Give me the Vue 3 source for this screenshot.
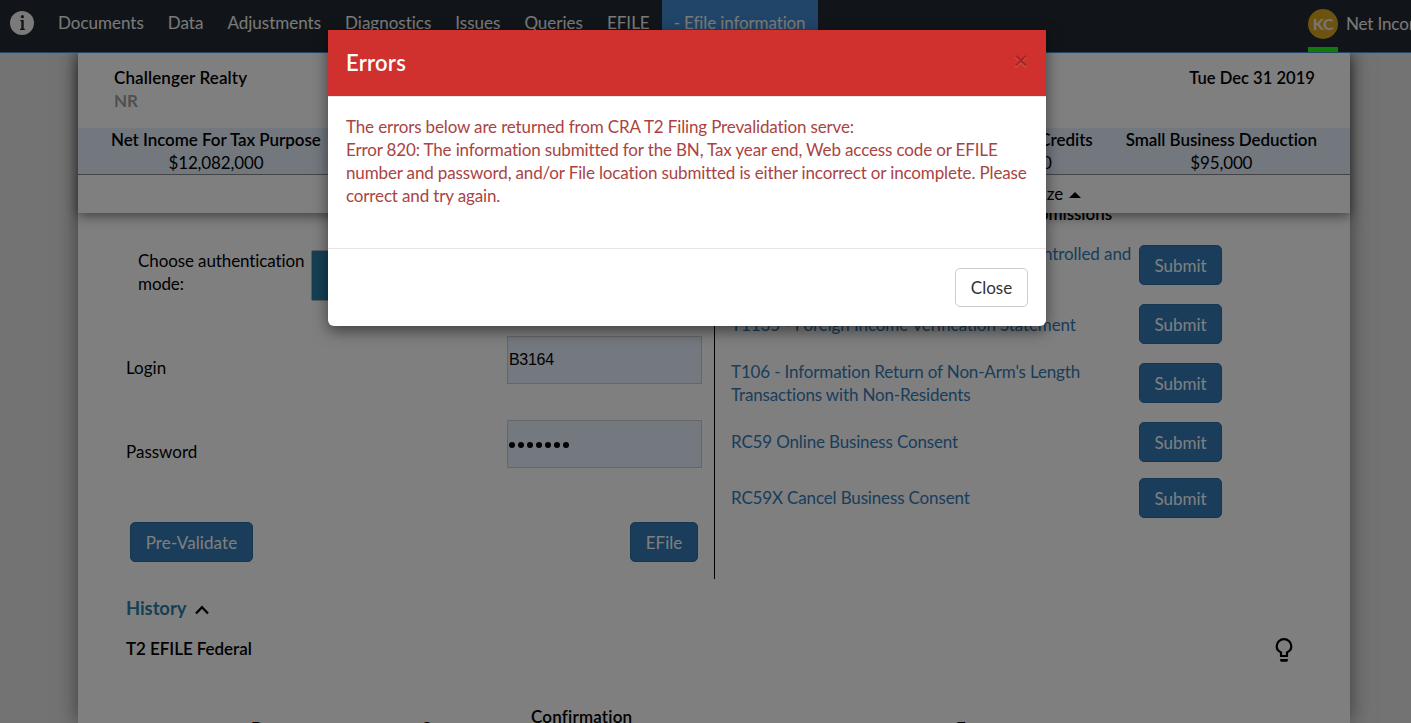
<script setup>
const nav = ['Documents', 'Data', 'Adjustments', 'Diagnostics', 'Issues', 'Queries', 'EFILE']
const figures = [
  { label: 'Other Credits', value: '$0' },
  { label: 'Small Business Deduction', value: '$95,000' },
]
const submissions = [
  'T1134 - Information Return Relating to Controlled and Non-Controlled Foreign Affiliates',
  'T1135 - Foreign Income Verification Statement',
  "T106 - Information Return of Non-Arm's Length Transactions with Non-Residents",
  'RC59 Online Business Consent',
  'RC59X Cancel Business Consent',
]
</script>

<template>
  <div class="app">
    <header class="topbar">
      <svg class="info" viewBox="0 0 24 24">
        <circle cx="12" cy="12" r="12" fill="#f4f4f4" />
        <circle cx="12.400" cy="5.7" r="1.6" fill="#222a33" />
        <path d="M10.400 9h3.300v8.700h1.200v1.200H10v-1.200h1.300v-7.500h-.9z" fill="#222a33" />
      </svg>
      <nav class="menu">
        <a v-for="n in nav" :key="n">{{ n }}</a>
        <a class="active">- Efile information</a>
      </nav>
      <div class="user">
        <div class="who"><span class="avatar">KC</span></div>
        <span class="netlabel">Net Income</span>
      </div>
    </header>

    <main class="card">
      <section class="summary">
        <div class="titles">
          <div>
            <div class="bold company">Challenger Realty</div>
            <div class="status">NR</div>
          </div>
          <div class="bold date">Tue Dec 31 2019</div>
        </div>
        <div class="figures">
          <div class="figure first"><span class="bold netinc">Net Income For Tax Purpose</span><span>$12,082,000</span></div>
          <div v-for="f in figures" :key="f.label" class="figure">
            <span class="bold">{{ f.label }}</span><span>{{ f.value }}</span>
          </div>
        </div>
        <div class="minimize">Minimize <i class="caret"></i></div>
      </section>

      <div class="columns">
        <section class="left">
          <div class="auth">
            <span class="authlabel">Choose authentication mode:</span>
            <span class="mode"></span>
          </div>
          <div class="field">
            <label>Login</label>
            <div class="box">B3164</div>
          </div>
          <div class="field">
            <label>Password</label>
            <div class="box dots"><i v-for="d in 7" :key="d"></i></div>
          </div>
          <div class="actions">
            <button class="btn pre">Pre-Validate</button>
            <button class="btn efile">EFile</button>
          </div>
        </section>
        <section class="right">
          <div class="bold heading">Other Submissions</div>
          <div v-for="s in submissions" :key="s" class="row">
            <a class="link">{{ s }}</a>
            <button class="btn submit">Submit</button>
          </div>
        </section>
      </div>

      <div class="history">
        History
        <svg viewBox="0 0 14 10"><path d="M1 8.5 7 2.2l6 6.3" fill="none" stroke="#000" stroke-width="2.3" /></svg>
      </div>
      <div class="fedrow">
        <span class="bold">T2 EFILE Federal</span>
        <svg class="bulb" viewBox="0 0 18 24">
          <path d="M6 18v-3.6C3.200 12.900 1.700 11 1.700 8.400a7.300 7.300 0 0 1 14.600 0c0 2.600-1.500 4.500-4.300 6V18z" fill="none" stroke="#000" stroke-width="2.200" />
          <path d="M5.200 21h7.600v1.200q0 1.500-1.500 1.500H6.700q-1.500 0-1.500-1.500z" />
        </svg>
      </div>
      <div class="thead bold">
        <span>Date</span><span>Status</span><span class="conf">Confirmation<br />number</span><span>Errors</span>
      </div>
    </main>

    <div class="backdrop"></div>

    <div class="modal">
      <div class="mhead">
        <span class="mtitle">Errors</span>
        <span class="x">×</span>
      </div>
      <div class="mbody">
        The errors below are returned from CRA T2 Filing Prevalidation serve:<br />
        Error 820: The information submitted for the BN, Tax year end, Web access code or EFILE<br />
        number and password, and/or File location submitted is either incorrect or incomplete. Please<br />
        correct and try again.
      </div>
      <div class="mfoot"><button class="close">Close</button></div>
    </div>
  </div>
</template>

<style>
html, body { overflow: hidden; }
</style>

<style scoped>
* { box-sizing: border-box; }
.app {
  position: relative; width: 1411px; height: 723px; overflow: hidden;
  background: #e6e6e6; color: #000;
  font: 400 17px/23px Lato, sans-serif;
  letter-spacing: -0.14px; font-variant-ligatures: none;
}
.bold { font-weight: 600; letter-spacing: -0.06px; }
.topbar {
  position: relative; z-index: 1;
  display: flex; height: 53px; background: #222a33; border-bottom: 1px solid #428bca;
  color: #f4f4f4; white-space: nowrap; overflow: hidden;
}
.info { width: 24px; height: 24px; margin: 11px 12px 0 10px; flex: none; }
.menu { display: flex; line-height: 46px; letter-spacing: 0; }
.menu a { padding: 0 12px; }
.menu .active { background: #428bd0; letter-spacing: -0.12px; width: 156px; }
.user { display: flex; width: 103px; margin-left: auto; flex: none; }
.who { width: 30px; height: 52px; padding-top: 9px; border-bottom: 5px solid #20f414; flex: none; }
.avatar {
  display: block; width: 30px; height: 30px; border-radius: 50%; background: #daa520;
  text-align: center; line-height: 30px; font-weight: 700; color: #eee; font-size: 16px;
}
.netlabel { margin-left: 8px; line-height: 47px; }

.card {
  position: relative; width: 1272px; height: 670px; margin-left: 78px;
  background: #fff; box-shadow: 0 0 20px rgba(0,0,0,.5);
}
.summary {
  position: absolute; left: 0; top: 0; width: 100%; height: 160px; background: #fff;
  box-shadow: 0 3px 12px rgba(0,0,0,.5);
}
.titles { display: flex; justify-content: space-between; height: 75px; padding: 13px 35px 0 36px; }
.company { letter-spacing: .12px; }
.date { letter-spacing: 0; font-size: 16.6px; padding-top: 1px; }
.status { color: #a0a0a0; font-weight: 700; }
.figures {
  display: flex; height: 47px; gap: 33px; padding: 0 33px 0; background: #e6f1fe;
  border-bottom: 1px solid #888;
}
.figure { display: flex; flex-direction: column; align-items: center; white-space: nowrap; }
.first { margin-right: auto; }
.minimize { display: flex; justify-content: flex-end; align-items: center; gap: 6px; padding: 7px 269px 0 0; }
.caret { border: 6px solid transparent; border-top: 0; border-bottom: 6px solid #000; margin-top: 2px; }

.columns { display: flex; padding-top: 149px; }
.left { width: 637px; height: 377px; border-right: 1px solid #000; padding: 47px 12px 0 48px; }
.auth { display: flex; align-items: flex-start; padding-left: 12px; height: 87px; }
.authlabel { width: 173px; letter-spacing: -0.1px; }
.mode { width: 120px; height: 51px; margin-top: 1px; background: #2b81a8; border: 1px solid #bbb; border-radius: 2px; }
.field { display: flex; justify-content: space-between; height: 84px; letter-spacing: 0; }
.field label { padding-top: 20px; }
.box {
  width: 195px; height: 48px; background: #e8f0fe; border: 1px solid #ccc; padding-left: 1px;
  font: 16px/45px "Liberation Sans", Arial, sans-serif; letter-spacing: -0.3px;
}
.dots { display: flex; align-items: center; gap: 3px; padding: 1px 0 0 1px; }
.dots i { width: 6px; height: 6px; border-radius: 50%; background: #000; }
.actions { display: flex; justify-content: space-between; padding: 18px 4px 0; }
.btn {
  height: 40px; padding: 0; background: #337ab7; border: 1px solid #2e6da4; border-radius: 5px;
  color: #fff; font: inherit; letter-spacing: 0; flex: none;
}
.pre { width: 123px; letter-spacing: .1px; }
.efile { width: 68px; }
.submit { width: 83px; }
.right { width: 507px; padding-left: 16px; display: flex; flex-direction: column; gap: 16px; }
.heading { text-align: right; padding-right: 110px; height: 24px; }
.row { display: flex; align-items: center; gap: 8px; }
.row:nth-last-child(-n+2) .link { position: relative; top: -1px; }
.link { width: 400px; color: #337ab7; letter-spacing: -0.15px; }
.row:nth-child(2) .link { margin-right: -4px; width: 404px; letter-spacing: -0.09px; }
.row:nth-child(3) .link { letter-spacing: -0.1px; }

.history {
  display: flex; align-items: center; gap: 9px; padding: 18px 48px 0;
  color: #2b81a8; font-size: 18.400px; font-weight: 700; letter-spacing: -.05px;
}
.history svg { width: 14px; height: 10px; margin-top: 3px; }
.fedrow { display: flex; justify-content: space-between; align-items: center; padding: 15px 57px 0 48px; height: 42px; }
.bulb { width: 18px; height: 24px; margin-top: 3px; flex: none; }
.thead { display: grid; grid-template-columns: 171px 109px 425px auto; align-items: center; padding: 43px 0 0 173px; }
.conf { letter-spacing: .2px; }

.backdrop { position: absolute; inset: 0; z-index: 2; background: rgba(0,0,0,.5); }
.modal {
  position: absolute; z-index: 3; left: 328px; top: 30px; width: 718px; height: 296px;
  background: #fff; border-radius: 0 0 6px 6px; box-shadow: 0 5px 15px rgba(0,0,0,.5);
}
.mhead {
  display: flex; justify-content: space-between; height: 67px; padding: 18px 18px 0;
  background: #d1312e; border-bottom: 1px solid #e5e5e5;
}
.mtitle { color: #fff; font-size: 22px; line-height: 30px; font-weight: 600; letter-spacing: .25px; }
.x { color: #000; opacity: .2; font-size: 25px; font-weight: 700; line-height: 22px; text-shadow: 0 1px 0 #fff; letter-spacing: 0; }
.mbody { height: 151px; padding: 18px 18px; color: #a94442; white-space: nowrap; letter-spacing: -0.145px; }
.mfoot { display: flex; justify-content: flex-end; border-top: 1px solid #e5e5e5; padding: 19px 18px; }
.close { width: 73px; height: 39px; background: #fff; border: 1px solid #ccc; border-radius: 5px; color: #333; font: inherit; padding: 0; }
</style>
